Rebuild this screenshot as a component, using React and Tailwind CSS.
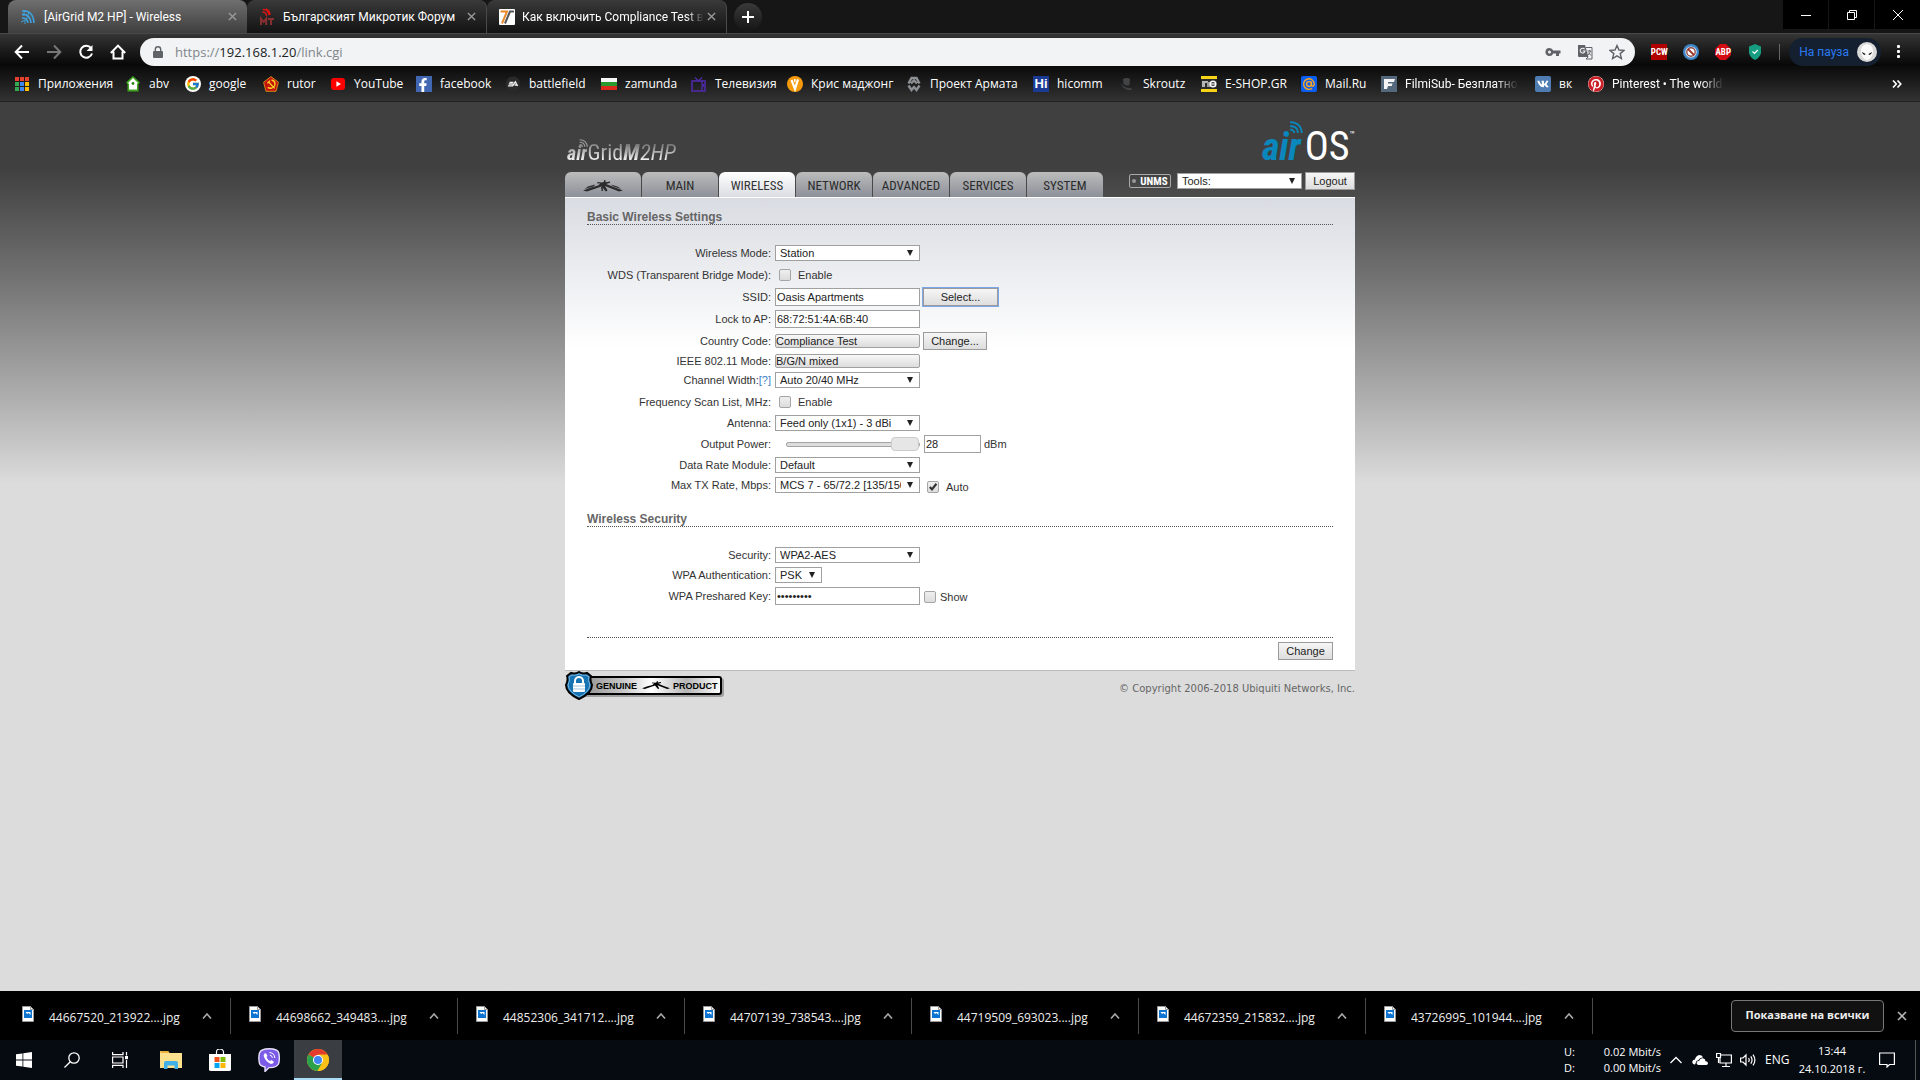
import React from 'react';
import { FcGoogle } from 'react-icons/fc';
import { FaFacebookF, FaVk, FaPinterest } from 'react-icons/fa';

const tools = ['Tools:', 'Align Antenna...', 'Site Survey...', 'Discovery...', 'Ping...', 'Traceroute...', 'Speed Test...'];

const downloads = [
  '44667520_213922....jpg',
  '44698662_349483....jpg',
  '44852306_341712....jpg',
  '44707139_738543....jpg',
  '44719509_693023....jpg',
  '44672359_215832....jpg',
  '43726995_101944....jpg',
];

/* ---------- bookmark icons ---------- */

function AppsIcon() {
  const colors = ['#e8402f', '#e8402f', '#e8402f', '#34a853', '#4285f4', '#fbbc05', '#34a853', '#4285f4', '#fbbc05'];
  return (
    <svg viewBox="0 0 16 16" className="size-4">
      {colors.map((c, i) => (
        <rect key={i} x={1 + (i % 3) * 5} y={1 + Math.floor(i / 3) * 5} width="4" height="4" fill={c} />
      ))}
    </svg>
  );
}

function AbvIcon() {
  return (
    <svg viewBox="0 0 16 16" className="size-4">
      <path d="M8 0 L15 6.5 L13.5 8 V15.5 H2.5 V8 L1 6.5 Z" fill="#3fa51f" />
      <path d="M8 2 L13 7 L12 8 V13.5 H4 V8 L3 7 Z" fill="#fff" />
      <circle cx="8" cy="7.5" r="1.4" fill="#2c8a12" />
    </svg>
  );
}

function GoogleIcon() {
  return (
    <span className="flex size-4 items-center justify-center rounded-full bg-white">
      <FcGoogle className="size-[14px]" />
    </span>
  );
}

function RutorIcon() {
  return (
    <svg viewBox="0 0 16 16" className="size-4">
      <path d="M8 .6 L15.4 6.2 L13 15.3 H3 L.6 6.2 Z" fill="#c4120c" stroke="#e8a51a" strokeWidth=".8" />
      <path d="M8.5 4 a4 4 0 0 1 .6 7.8 a4.5 4.5 0 0 1 -4.4 -.4 M4.4 7.2 L7 4.6 M5.6 6 L11.6 12.4" fill="none" stroke="#f9d423" strokeWidth="1.3" />
    </svg>
  );
}

function YoutubeIcon() {
  return (
    <svg viewBox="0 0 16 16" className="size-4">
      <rect x="1" y="2" width="14" height="12" rx="3" fill="#f00" />
      <path d="M6.4 5.3 L11 8 L6.4 10.7 Z" fill="#fff" />
    </svg>
  );
}

function FacebookIcon() {
  return (
    <span className="flex size-4 items-end justify-end bg-[#4267b2] pr-[2px]">
      <FaFacebookF className="size-[14px] text-white" />
    </span>
  );
}

function EaIcon() {
  return (
    <svg viewBox="0 0 16 16" className="size-4">
      <circle cx="8" cy="8" r="7.5" fill="#2a2a2a" />
      <path d="M4.5 6.3 H8.5 M3.8 8 H7.8 M3 9.8 H7.6 L10.4 5.8 L12.6 10 M9.6 9 H12" fill="none" stroke="#f2f2f2" strokeWidth="1.3" />
    </svg>
  );
}

function FlagIcon() {
  return (
    <svg viewBox="0 0 16 16" className="size-4">
      <rect y="2" width="16" height="4" fill="#f7f7f7" />
      <rect y="6" width="16" height="4" fill="#2a9b2f" />
      <rect y="10" width="16" height="4" fill="#dd2a1b" />
    </svg>
  );
}

function TvIcon() {
  return (
    <svg viewBox="0 0 16 16" className="size-4" fill="none" stroke="#4f2aa8">
      <rect x="1" y="5" width="13" height="10" strokeWidth="1.6" />
      <path d="M11 5 V15 M7.5 5 L4 1.5 M7.5 5 L11 1.5 M12.5 8 V11" strokeWidth="1.3" />
    </svg>
  );
}

function KrisIcon() {
  return (
    <svg viewBox="0 0 16 16" className="size-4">
      <circle cx="8" cy="8" r="8" fill="#f59a0c" />
      <path d="M4.5 4 L8 13 L11 3.4" fill="none" stroke="#fff" strokeWidth="2.2" />
      <path d="M7.8 3 V6" stroke="#fff" strokeWidth="1.6" />
    </svg>
  );
}

function ArmataIcon() {
  return (
    <svg viewBox="0 0 16 16" className="size-4" fill="none" stroke="#8d9196" strokeWidth="2.4">
      <path d="M2.5 7.5 L5.5 2 H10.5 L13.5 7.5 M5 7.5 L8 4.5 L11 7.5" />
      <path d="M2.5 9.5 L5.5 14 L8 11 L10.5 14 L13.5 9.5" />
    </svg>
  );
}

function HiIcon() {
  return (
    <span className="flex size-4 items-center justify-center bg-[#1b3a94] font-[Liberation_Sans,sans-serif] text-[13px] leading-none font-bold text-white">
      Hi
    </span>
  );
}

function SkroutzIcon() {
  return (
    <svg viewBox="0 0 16 16" className="size-4">
      <path d="M4 3 Q8 1 11 3 L10.5 9 Q8 10.5 4.5 8 Z M1 7 Q6 13 12 12 L13 14 Q5 15 1 7 Z" fill="#424446" />
    </svg>
  );
}

function EshopIcon() {
  return (
    <svg viewBox="0 0 16 16" className="size-4">
      <rect width="16" height="16" fill="#2b2b2b" />
      <rect width="16" height="3" fill="#f7d417" />
      <rect y="13" width="16" height="3" fill="#f7d417" />
      <path d="M1 5 H7 V7 H4 V11 H1 Z" fill="#b5b5b5" />
      <rect x="6" y="6" width="3" height="5" fill="#9a9a9a" />
      <circle cx="12" cy="8" r="2.8" fill="none" stroke="#fff" strokeWidth="1.5" />
      <path d="M9.5 8 H14.5" stroke="#fff" strokeWidth="1.2" />
    </svg>
  );
}

function MailIcon() {
  return (
    <svg viewBox="0 0 16 16" className="size-4">
      <rect width="16" height="16" rx="2" fill="#0a5ff0" />
      <circle cx="8" cy="8" r="2.4" fill="none" stroke="#fca521" strokeWidth="1.4" />
      <path d="M10.4 5.6 V8.8 Q10.6 10.6 12 10.2 Q13.4 9.6 13.2 7.6 A5.3 5.3 0 1 0 11 12.4" fill="none" stroke="#fca521" strokeWidth="1.4" />
    </svg>
  );
}

function FilmiIcon() {
  return (
    <svg viewBox="0 0 16 16" className="size-4">
      <rect width="16" height="16" fill="#56697c" />
      <path d="M3 13 V3 H14 L13 6 H7 V7.5 H11.5 L10.8 10 H7 L6 13 Z" fill="#f4f4f4" />
    </svg>
  );
}

function VkIcon() {
  return (
    <span className="flex size-4 items-center justify-center rounded-xs bg-[#4f7db3]">
      <FaVk className="size-3 text-white" />
    </span>
  );
}

function PinterestIcon() {
  return (
    <span className="flex size-4 rounded-full bg-white">
      <FaPinterest className="size-4 text-[#cb1f27]" />
    </span>
  );
}

const bookmarks = [
  { name: 'Приложения', icon: AppsIcon, width: 'w-[111px]' },
  { name: 'abv', icon: AbvIcon, width: 'w-[60px]' },
  { name: 'google', icon: GoogleIcon, width: 'w-[78px]' },
  { name: 'rutor', icon: RutorIcon, width: 'w-[67px]' },
  { name: 'YouTube', icon: YoutubeIcon, width: 'w-[86px]' },
  { name: 'facebook', icon: FacebookIcon, width: 'w-[89px]' },
  { name: 'battlefield', icon: EaIcon, width: 'w-[96px]' },
  { name: 'zamunda', icon: FlagIcon, width: 'w-[90px]' },
  { name: 'Телевизия', icon: TvIcon, width: 'w-[96px]' },
  { name: 'Крис маджонг', icon: KrisIcon, width: 'w-[119px]' },
  { name: 'Проект Армата', icon: ArmataIcon, width: 'w-[127px]' },
  { name: 'hicomm', icon: HiIcon, width: 'w-[86px]' },
  { name: 'Skroutz', icon: SkroutzIcon, width: 'w-[82px]' },
  { name: 'E-SHOP.GR', icon: EshopIcon, width: 'w-[100px]' },
  { name: 'Mail.Ru', icon: MailIcon, width: 'w-[80px]' },
  { name: 'FilmiSub- Безплатно', icon: FilmiIcon, width: 'w-[154px]', fade: true },
  { name: 'вк', icon: VkIcon, width: 'w-[53px]' },
  { name: "Pinterest • The world'", icon: PinterestIcon, width: 'w-[152px]', fade: true },
];

/* ---------- browser chrome ---------- */

function WavesIcon() {
  return (
    <svg viewBox="0 0 16 16" className="size-4" fill="none" stroke="#3fa0dc" strokeWidth="1.7">
      <path d="M2 2 Q13 1 14 14 M2 5.5 Q10 5 11 14 M2 9 Q7.5 9 8 14" />
      <path d="M1 13 L5 11 L5 15 M5 1 L3 7 M9 3 L6 12" strokeWidth="1" />
    </svg>
  );
}

function MtIcon() {
  return (
    <svg viewBox="0 0 16 18" className="h-[18px] w-4" fill="none">
      <path d="M4 1.5 Q9 1 10 7 M3.5 4 Q7 4 7.6 8 M7 1 Q11 3 11 7" stroke="#e01313" strokeWidth="1.4" />
      <path d="M2 17 V10.5 L4.6 14 L7.2 10.5 V17 M9 11 H15 M12 11 V17" stroke="#8a3030" strokeWidth="1.9" />
    </svg>
  );
}

function TtIcon() {
  return (
    <svg viewBox="0 0 16 16" className="size-4">
      <rect width="16" height="16" rx="1" fill="#fff" />
      <path d="M1.5 2.5 H8 L3 14.5" fill="none" stroke="#e98a2f" strokeWidth="2" />
      <path d="M15 2.5 H11 L6 14.5" fill="none" stroke="#54565a" strokeWidth="2" />
    </svg>
  );
}

function CloseIcon({ className }) {
  return (
    <svg viewBox="0 0 10 10" className={className} fill="none" stroke="currentColor" strokeWidth="1.5">
      <path d="M1 1 L9 9 M9 1 L1 9" />
    </svg>
  );
}

function BrowserTab({ icon: Icon, title, active, fade }) {
  return (
    <div
      className={
        active
          ? 'flex h-[33px] w-[239px] items-center rounded-t-lg bg-linear-to-b from-[#707070] to-[#3e3e3e] pr-[10px] pl-3'
          : 'flex h-[33px] w-[240px] items-center rounded-t-lg border-r border-[#4a4a4a] bg-linear-to-b from-[#3a3a3a] to-[#131313] pr-[10px] pl-3'
      }
    >
      <Icon />
      <span
        className={
          fade
            ? 'ml-[7px] mask-r-from-90% font-[Roboto,sans-serif] text-[12px] leading-4 whitespace-nowrap text-white'
            : 'ml-2 font-[Roboto,sans-serif] text-[12px] leading-4 whitespace-nowrap text-white'
        }
      >
        {title}
      </span>
      <button aria-label="Close tab" className="ml-auto text-[#9a9a9a]">
        <CloseIcon className="size-[9px]" />
      </button>
    </div>
  );
}

function TabStrip() {
  return (
    <div className="flex h-[33px] items-start justify-between bg-[#161616] pl-2">
      <div className="flex">
        <BrowserTab icon={WavesIcon} title="[AirGrid M2 HP] - Wireless" active />
        <BrowserTab icon={MtIcon} title="Българският Микротик Форум" />
        <BrowserTab icon={TtIcon} title="Как включить Compliance Test в" fade />
        <button aria-label="New tab" className="mt-[3px] ml-[7px] flex size-7 items-center justify-center rounded-full bg-linear-to-b from-[#3a3a3a] to-[#151515] text-white">
          <svg viewBox="0 0 12 12" className="size-3" stroke="currentColor" strokeWidth="2">
            <path d="M6 0 V12 M0 6 H12" />
          </svg>
        </button>
      </div>
      <div className="flex h-[29px] gap-px text-white">
        <button aria-label="Minimize" className="flex w-[45px] items-center justify-center bg-black">
          <svg viewBox="0 0 10 10" className="size-[10px]" stroke="currentColor"><path d="M0 5.5 H10" /></svg>
        </button>
        <button aria-label="Restore" className="flex w-[45px] items-center justify-center bg-black">
          <svg viewBox="0 0 10 10" className="size-[10px]" fill="none" stroke="currentColor">
            <path d="M.5 2.5 H7.5 V9.5 H.5 Z M2.5 2 V.5 H9.5 V7.5 H8" />
          </svg>
        </button>
        <button aria-label="Close" className="flex w-[45px] items-center justify-center bg-black">
          <svg viewBox="0 0 10 10" className="size-[10px]" stroke="currentColor"><path d="M0 0 L10 10 M10 0 L0 10" /></svg>
        </button>
      </div>
    </div>
  );
}

function Toolbar() {
  return (
    <div className="flex h-[33px] items-center border-t border-[#484848] bg-linear-to-b from-[#353535] to-[#070707] pt-1 pr-[19px] pl-[14px] text-white">
      <div className="flex gap-4">
        <button aria-label="Back">
          <svg viewBox="0 0 16 16" className="size-4" fill="none" stroke="currentColor" strokeWidth="2"><path d="M15 8 H2 M8 1.5 L1.7 8 L8 14.5" /></svg>
        </button>
        <button aria-label="Forward" className="text-[#777]">
          <svg viewBox="0 0 16 16" className="size-4" fill="none" stroke="currentColor" strokeWidth="2"><path d="M1 8 H14 M8 1.5 L14.3 8 L8 14.5" /></svg>
        </button>
        <button aria-label="Reload">
          <svg viewBox="0 0 16 16" className="size-4" fill="none" stroke="currentColor" strokeWidth="2">
            <path d="M13 4 A6 6 0 1 0 14 9.5" />
            <path d="M14.5 1 V7 H8.5 Z" fill="currentColor" stroke="none" />
          </svg>
        </button>
        <button aria-label="Home">
          <svg viewBox="0 0 16 16" className="size-4" fill="none" stroke="currentColor" strokeWidth="2"><path d="M.8 9 L8 1.6 L15.2 9 M3.5 7.5 V14.5 H12.5 V7.5" /></svg>
        </button>
      </div>

      <div className="ml-[14px] flex h-7 flex-1 items-center rounded-full bg-[#f1f3f4] pr-[10px] pl-[13px] text-[#5f6368]">
        <svg viewBox="0 0 10 12" className="h-3 w-[10px]">
          <rect y="5" width="10" height="7" rx="1" fill="currentColor" />
          <path d="M2.3 5.5 V3.4 A2.7 2.7 0 0 1 7.7 3.4 V5.5" fill="none" stroke="currentColor" strokeWidth="1.4" />
        </svg>
        <p className="ml-3 flex-1 text-[13px] leading-5 text-[#80868b]">
          https://<span className="text-[#202124]">192.168.1.20</span>/link.cgi
        </p>
        <div className="flex items-center gap-4">
          <button aria-label="Saved password">
            <svg viewBox="0 0 16 16" className="size-4">
              <path d="M4.5 4 A4 4 0 1 0 8.2 9.4 H11 V12 H14 V9.4 H15.5 V6.6 H8.2 A4 4 0 0 0 4.5 4 Z M4.5 6.5 A1.5 1.5 0 1 1 4.5 9.5 A1.5 1.5 0 1 1 4.5 6.5 Z" fill="currentColor" fillRule="evenodd" />
            </svg>
          </button>
          <button aria-label="Translate">
            <svg viewBox="0 0 16 16" className="size-4">
              <path d="M1 1 H8 L11.5 13 H2 A1 1 0 0 1 1 12 Z" fill="currentColor" />
              <path d="M7.6 5.2 A2.4 2.4 0 1 0 8 7 H5.6" fill="none" stroke="#f1f3f4" strokeWidth="1.1" />
              <path d="M9 3.5 H15 V15 H9 L11 13 M10.5 7 H14 M12.3 6 V7 M13.5 7 Q13 10 10.8 11 M11.3 8.5 L14 11.5" fill="none" stroke="currentColor" />
            </svg>
          </button>
          <button aria-label="Bookmark">
            <svg viewBox="0 0 16 16" className="size-4" fill="none" stroke="currentColor" strokeWidth="1.4">
              <path d="M8 1.5 L10 6 L15 6.4 L11.2 9.6 L12.4 14.5 L8 11.8 L3.6 14.5 L4.8 9.6 L1 6.4 L6 6 Z" />
            </svg>
          </button>
        </div>
      </div>

      <div className="ml-4 flex items-center gap-4">
        <span className="flex size-4 items-center justify-center bg-[#b00000] font-[Roboto_Condensed,Liberation_Sans,sans-serif] text-[9px] leading-none font-bold">PCW</span>
        <svg viewBox="0 0 16 16" className="size-4">
          <circle cx="8" cy="8" r="8" fill="#3f86c9" />
          <circle cx="8" cy="8" r="5.6" fill="#fff" />
          <circle cx="8" cy="8" r="4.2" fill="none" stroke="#8c4b45" strokeWidth="1.4" />
          <path d="M5 5 L11 11" stroke="#a3322b" strokeWidth="1.8" />
        </svg>
        <span className="relative flex size-4 items-center justify-center">
          <svg viewBox="0 0 16 16" className="absolute inset-0 size-4"><path d="M5 0 H11 L16 5 V11 L11 16 H5 L0 11 V5 Z" fill="#d40d12" /></svg>
          <span className="relative font-[Roboto_Condensed,Liberation_Sans,sans-serif] text-[9px] leading-none font-bold">ABP</span>
        </span>
        <svg viewBox="0 0 16 16" className="size-4">
          <path d="M8 0 L14 2.5 V9 Q13 13.5 8 16 Q3 13.5 2 9 V2.5 Z" fill="#169c80" />
          <path d="M5.5 7.5 L7.5 9.5 L10.8 6" fill="none" stroke="#fff" strokeWidth="1.2" />
        </svg>
      </div>
      <span className="mx-[9px] ml-4 h-4 w-px bg-[#666]" />
      <button className="flex h-7 items-center rounded-full bg-[#142030] pr-1 pl-[10px] font-[Roboto,sans-serif] text-[12px] text-[#2b7bf3]">
        На пауза
        <svg viewBox="0 0 20 20" className="ml-2 size-5">
          <circle cx="10" cy="10" r="10" fill="#d9d9d9" />
          <path d="M10 2 Q17 3 16 11 Q14 18 10 18 Q6 18 4 11 Q3 3 10 2" fill="#fafafa" />
          <path d="M5 10 L8.6 12 L7.8 13 Q5.4 12.6 5 10 M15 10 L11.4 12 L12.2 13 Q14.6 12.6 15 10" fill="#111" />
        </svg>
      </button>
      <button aria-label="Menu" className="ml-4">
        <svg viewBox="0 0 4 16" className="h-4 w-1" fill="currentColor">
          <rect y="1" width="3" height="3" rx="1" />
          <rect y="6" width="3" height="3" rx="1" />
          <rect y="11" width="3" height="3" rx="1" />
        </svg>
      </button>
    </div>
  );
}

function BookmarksBar() {
  return (
    <nav className="flex h-9 items-center justify-between border-b border-[#222] bg-linear-to-b from-[#0b0b0b] to-[#333] pr-[18px] pl-[14px]">
      <div className="flex">
        {bookmarks.map((b) => (
          <a key={b.name} href="#" className={`flex shrink-0 items-center ${b.width}`}>
            <b.icon />
            <span className={b.fade ? 'ml-2 mask-r-from-80% font-[Roboto,sans-serif] text-[12px] leading-4 whitespace-nowrap text-white' : 'ml-2 text-[12px] leading-4 whitespace-nowrap text-white'}>
              {b.name}
            </span>
          </a>
        ))}
      </div>
      <button aria-label="More bookmarks" className="text-white">
        <svg viewBox="0 0 10 8" className="h-2 w-[10px]" fill="none" stroke="currentColor" strokeWidth="1.6">
          <path d="M1 .5 L4.3 4 L1 7.5 M5.5 .5 L8.8 4 L5.5 7.5" />
        </svg>
      </button>
    </nav>
  );
}

/* ---------- airOS page ---------- */

function RadiusMark({ className }) {
  return (
    <svg viewBox="0 0 40 12" className={className} fill="currentColor">
      <path d="M0 10.5 L8 7.6 L15 5.6 L17.4 3.4 L14 3.2 L14.4 2 L19 2.4 L21 1.8 L21.2 0 L22.4 0 L22.6 2.2 L27 1.6 L27.2 2.8 L23.2 4 L32 7.4 L40 10.4 L36 11.6 L22 6 L24.6 10.6 L22.8 11.4 L18.6 6.4 L4 11.6 Z" />
      <path d="M12 4.6 L5 6.6 L1.6 9 L11 6.2 Z M28 4.6 L35 6.8 L38 9 L30 6.2 Z" />
      <path d="M18 7 L18.6 11 L20 11 L19.6 7 Z" />
    </svg>
  );
}

function Waves({ className }) {
  return (
    <svg viewBox="0 0 14 14" className={className} fill="none" stroke="currentColor" strokeWidth="1.8">
      <path d="M1 1.2 Q12 1.4 12.8 12 M1 5 Q8.6 5 9 12 M1 8.6 Q5 8.8 5.4 12" />
    </svg>
  );
}

function Select({ id, options, className = 'w-[145px]', ...rest }) {
  return (
    <span className={`relative inline-flex h-4 ${className}`}>
      <select id={id} className="h-4 w-full appearance-none border border-[#a0a0a0] bg-white pr-[18px] pl-1 text-[11px] leading-[14px] text-[#222]" {...rest}>
        {options.map((o) => (
          <option key={o}>{o}</option>
        ))}
      </select>
      <svg viewBox="0 0 6 6" className="pointer-events-none absolute top-[5px] right-[7px] size-[6px]">
        <path d="M0 0 H6 L3 6 Z" fill="#222" />
      </svg>
    </span>
  );
}

function Checkbox({ id, checked }) {
  return (
    <span className="relative inline-flex size-3">
      <input id={id} type="checkbox" defaultChecked={checked} className="peer size-3 appearance-none rounded-xs border border-[#a5a5a5] bg-linear-to-b from-[#efefef] to-[#dcdcdc]" />
      <svg viewBox="0 0 12 12" className="pointer-events-none absolute inset-0 hidden size-3 peer-checked:block" fill="none" stroke="#333" strokeWidth="2.2">
        <path d="M2.8 6 L5 8.4 L9.4 2.8" />
      </svg>
    </span>
  );
}

function Button({ children, className = '' }) {
  return (
    <button className={`h-[18px] border border-[#9a9a9a] bg-linear-to-b from-[#f6f6f6] to-[#dedede] text-[11px] leading-4 text-[#222] ${className}`}>
      {children}
    </button>
  );
}

function Row({ label, htmlFor, help, height = 'h-5', children }) {
  return (
    <div className={`flex items-center gap-[3px] ${height}`}>
      <div className="w-[185px] shrink-0 pr-px text-right whitespace-nowrap">
        <label htmlFor={htmlFor}>{label}</label>
        {help && <a href="#" className="text-[#3b7fc4]">[?]</a>}
      </div>
      {children}
    </div>
  );
}

const inputClass = 'h-[18px] border border-[#a0a0a0] bg-white px-px text-[11px] leading-4 text-[#222]';
const readonlyClass = 'h-[14px] w-[145px] rounded-xs border border-[#a0a0a0] bg-linear-to-b from-[#f8f8f8] to-[#dcdcdc] text-[11px] leading-3 text-[#222]';

function AirNav() {
  const tab = 'flex h-[25px] w-[76px] items-center justify-center rounded-t-md pt-[2px] font-[Roboto_Condensed,Roboto,sans-serif] text-[13px] leading-4';
  return (
    <div className="flex items-start justify-between">
      <nav className="flex gap-px">
        <a href="#" aria-label="Ubiquiti" className={`${tab} bg-linear-to-b from-[#bcbcbc] to-[#8c9098] text-[#2b2b2b]`}>
          <RadiusMark className="h-3 w-10" />
        </a>
        {['MAIN', 'WIRELESS', 'NETWORK', 'ADVANCED', 'SERVICES', 'SYSTEM'].map((name) => (
          <a
            key={name}
            href="#"
            className={
              name === 'WIRELESS'
                ? `${tab} bg-linear-to-b from-white to-[#dadde2] text-[#333]`
                : `${tab} bg-linear-to-b from-[#bcbcbc] to-[#8c9098] text-[#2b2b2b]`
            }
          >
            {name}
          </a>
        ))}
      </nav>
      <div className="flex items-center">
        <span className="mr-[6px] flex h-[14px] w-[42px] items-center justify-center gap-1 rounded-xs border border-[#aaa] font-[Roboto_Condensed,Roboto,sans-serif] text-[11px] leading-none font-bold text-white">
          <span className="size-1 rounded-full bg-[#999]" />
          UNMS
        </span>
        <Select id="tools" aria-label="Tools" options={tools} className="mr-[3px] w-[125px]" />
        <Button className="w-[50px]">Logout</Button>
      </div>
    </div>
  );
}

function AirHeader() {
  return (
    <div className="flex h-[70px] items-end justify-between">
      <div className="relative flex items-baseline pb-[5px] pl-[2px] font-[Roboto_Condensed,Roboto,sans-serif] leading-7">
        <span className="bg-linear-to-b from-[#8a8a8a] from-20% to-white to-80% bg-clip-text text-[20px] font-bold text-transparent italic">air</span>
        <span className="bg-linear-to-b from-[#8a8a8a] from-20% to-white to-80% bg-clip-text text-[22px] text-transparent">Grid</span>
        <span className="bg-linear-to-b from-[#777] from-20% to-white to-80% bg-clip-text pr-px text-[22px] font-bold text-transparent italic">M</span>
        <span className="bg-linear-to-b from-[#777] from-20% to-white to-80% bg-clip-text pr-1 text-[22px] text-transparent italic">2HP</span>
        <Waves className="absolute top-0 left-[14px] size-[9px] text-[#999]" />
      </div>
      <div className="relative flex items-baseline pb-[7px] font-[Roboto_Condensed,Roboto,sans-serif] leading-9">
        <span className="text-[38px] font-bold text-[#0a88bd] italic">air</span>
        <span className="ml-1 text-[40px] text-white">OS</span>
        <Waves className="absolute -top-2 left-[27px] size-[14px] text-[#0a88bd]" />
        <span className="self-start text-[10px] leading-3 text-white">™</span>
      </div>
    </div>
  );
}

function WirelessForm() {
  return (
    <form className="border-t border-b border-t-white border-b-[#bbb] bg-white bg-linear-to-b from-[#d9dce2] to-white to-[150px] px-[22px] pt-3 text-[11px] leading-[14px] text-[#333]" onSubmit={(e) => e.preventDefault()}>
      <h2 className="border-b border-dotted border-[#555] text-[12px] leading-[14px] font-bold text-[#666]">Basic Wireless Settings</h2>
      <div className="pt-[18px]">
        <Row label="Wireless Mode:" htmlFor="mode">
          <Select id="mode" options={['Station', 'Access Point']} />
        </Row>
        <Row label="WDS (Transparent Bridge Mode):" htmlFor="wds" height="h-[23px]">
          <span className="flex items-center gap-[7px] pl-1">
            <Checkbox id="wds" />
            <label htmlFor="wds">Enable</label>
          </span>
        </Row>
        <Row label="SSID:" htmlFor="ssid" height="h-[22px]">
          <input id="ssid" defaultValue="Oasis Apartments" className={`${inputClass} w-[145px]`} />
          <Button className="w-[75px] outline-1 outline-[#7ba7e8]">Select...</Button>
        </Row>
        <Row label="Lock to AP:" htmlFor="ap" height="h-[22px]">
          <input id="ap" defaultValue="68:72:51:4A:6B:40" className={`${inputClass} w-[145px]`} />
        </Row>
        <Row label="Country Code:" htmlFor="country" height="h-[22px]">
          <input id="country" readOnly value="Compliance Test" className={readonlyClass} />
          <Button className="w-16">Change...</Button>
        </Row>
        <Row label="IEEE 802.11 Mode:" htmlFor="ieee" height="h-[18px]">
          <input id="ieee" readOnly value="B/G/N mixed" className={readonlyClass} />
        </Row>
        <Row label="Channel Width:" htmlFor="width" help>
          <Select id="width" options={['Auto 20/40 MHz', '20 MHz', '40 MHz']} />
        </Row>
        <Row label="Frequency Scan List, MHz:" htmlFor="scan" height="h-[23px]">
          <span className="flex items-center gap-[7px] pl-1">
            <Checkbox id="scan" />
            <label htmlFor="scan">Enable</label>
          </span>
        </Row>
        <Row label="Antenna:" htmlFor="antenna">
          <Select id="antenna" options={['Feed only (1x1) - 3 dBi']} />
        </Row>
        <Row label="Output Power:" htmlFor="power" height="h-[22px]">
          <input
            id="power"
            type="range"
            min="0"
            max="28"
            defaultValue="28"
            className="mr-px ml-[11px] h-[14px] w-[134px] appearance-none bg-transparent [&::-webkit-slider-runnable-track]:h-[5px] [&::-webkit-slider-runnable-track]:rounded-xs [&::-webkit-slider-runnable-track]:border [&::-webkit-slider-runnable-track]:border-[#a5a5a5] [&::-webkit-slider-runnable-track]:bg-[#ddd] [&::-webkit-slider-thumb]:-mt-[6px] [&::-webkit-slider-thumb]:h-[14px] [&::-webkit-slider-thumb]:w-7 [&::-webkit-slider-thumb]:appearance-none [&::-webkit-slider-thumb]:rounded-sm [&::-webkit-slider-thumb]:border [&::-webkit-slider-thumb]:border-[#ccc] [&::-webkit-slider-thumb]:bg-[#e6e6e6]"
          />
          <input aria-label="Output power, dBm" defaultValue="28" className={`${inputClass} w-[57px]`} />
          <span>dBm</span>
        </Row>
        <Row label="Data Rate Module:" htmlFor="module">
          <Select id="module" options={['Default']} />
        </Row>
        <Row label="Max TX Rate, Mbps:" htmlFor="rate">
          <Select id="rate" options={['MCS 7 - 65/72.2 [135/150]']} />
          <span className="flex items-center gap-[7px] pt-[3px] pl-1">
            <Checkbox id="auto" checked />
            <label htmlFor="auto">Auto</label>
          </span>
        </Row>
      </div>

      <h2 className="mt-[17px] border-b border-dotted border-[#555] text-[12px] leading-[14px] font-bold text-[#666]">Wireless Security</h2>
      <div className="pt-[18px]">
        <Row label="Security:" htmlFor="security">
          <Select id="security" options={['WPA2-AES', 'WPA-AES', 'none']} />
        </Row>
        <Row label="WPA Authentication:" htmlFor="auth">
          <Select id="auth" options={['PSK', 'EAP']} className="w-[47px]" />
        </Row>
        <Row label="WPA Preshared Key:" htmlFor="key" height="h-[22px]">
          <input id="key" type="password" defaultValue="password1" autoComplete="off" className={`${inputClass} w-[145px]`} />
          <span className="flex items-center gap-1 pt-[2px] pl-px">
            <Checkbox id="show" />
            <label htmlFor="show">Show</label>
          </span>
        </Row>
      </div>

      <div className="mt-[30px] flex justify-end border-t border-dotted border-[#555] pt-1 pb-[10px]">
        <Button className="w-[55px]">Change</Button>
      </div>
    </form>
  );
}

function GenuineBadge() {
  return (
    <svg viewBox="0 0 162 30" className="h-[30px] w-[162px]">
      <defs>
        <linearGradient id="plate">
          <stop offset="0" stopColor="#8f8f8f" />
          <stop offset=".3" stopColor="#c8c8c8" />
          <stop offset=".5" stopColor="#fff" />
          <stop offset=".75" stopColor="#b5b5b5" />
          <stop offset="1" stopColor="#fff" />
        </linearGradient>
      </defs>
      <rect x="18" y="7" width="141" height="19" rx="3" fill="#9f9f9f" />
      <rect x="17" y="6" width="139" height="17" rx="2" fill="url(#plate)" stroke="#000" strokeWidth="2" />
      <path d="M14 1 Q18 3.5 22 2 L26 5 Q24.5 9 27 14 Q27 22 14 28 Q1 22 1 14 Q3.5 9 2 5 L6 2 Q10 3.5 14 1 Z" fill="#1673b4" stroke="#000" strokeWidth="2" />
      <path d="M14 3 Q18 5 21 4 L24 6 Q22.5 9 25 14 Q24 21 14 26 Q4 21 3 14 Q5.5 9 4 6 L7 4 Q10 5 14 3 Z" fill="none" stroke="#bfe0f5" strokeWidth=".6" />
      <rect x="8" y="12" width="12" height="9" rx="1" fill="#fff" />
      <path d="M10 12 V10 A4 4 0 0 1 18 10 V12" fill="none" stroke="#fff" strokeWidth="2" />
      <path d="M8 15 H20 M8 18 H20" stroke="#9ec5e0" />
      <text x="31" y="18" className="font-[Liberation_Sans,sans-serif] text-[9px] font-bold" fill="#000">GENUINE</text>
      <g transform="translate(77 10) scale(.7)">
        <path d="M0 10.5 L8 7.6 L15 5.6 L17.4 3.4 L14 3.2 L14.4 2 L19 2.4 L21 1.8 L21.2 0 L22.4 0 L22.6 2.2 L27 1.6 L27.2 2.8 L23.2 4 L32 7.4 L40 10.4 L36 11.6 L22 6 L24.6 10.6 L22.8 11.4 L18.6 6.4 L4 11.6 Z" />
      </g>
      <text x="108" y="18" className="font-[Liberation_Sans,sans-serif] text-[9px] font-bold" fill="#000">PRODUCT</text>
    </svg>
  );
}

function AirOsPage() {
  return (
    <main className="flex-1 overflow-hidden bg-[#dcdcdc] bg-linear-to-b from-[#404040] from-[66px] to-[#dcdcdc] to-[382px] font-[Liberation_Sans,Arial,sans-serif]">
      <div className="mx-auto w-[790px]">
        <AirHeader />
        <AirNav />
        <WirelessForm />
        <footer className="flex items-start justify-between">
          <GenuineBadge />
          <p className="pt-3 font-[DejaVu_Sans,Verdana,sans-serif] text-[10px] leading-3 text-[#666]">© Copyright 2006-2018 Ubiquiti Networks, Inc.</p>
        </footer>
      </div>
    </main>
  );
}

/* ---------- downloads and taskbar ---------- */

function FileIcon() {
  return (
    <svg viewBox="0 0 12 16" className="h-4 w-3">
      <path d="M.5 .5 H8.5 L11.5 3.5 V15.5 H.5 Z" fill="#fff" stroke="#9a9a9a" />
      <path d="M8.5 .5 V3.5 H11.5" fill="none" stroke="#9a9a9a" />
      <rect x="2" y="4" width="8" height="8" fill="#0d74d1" />
      <path d="M3.5 6 L5 8 L6.5 7 L8.5 9 V6 Z" fill="#fff" />
    </svg>
  );
}

function Downloads() {
  return (
    <div className="flex h-[49px] items-center justify-between bg-black pr-[13px] pl-1">
      <div className="flex">
        {downloads.map((name) => (
          <div key={name} className="flex h-9 w-[227px] items-center border-r border-[#4a4a4a] pl-[18px]">
            <span className="-mt-1"><FileIcon /></span>
            <span className="ml-[15px] w-[148px] pt-[5px] text-[12px] leading-4 whitespace-nowrap text-[#eee]">{name}</span>
            <button aria-label={`Options for ${name}`} className="ml-[5px] text-[#aaa]">
              <svg viewBox="0 0 10 6" className="h-[6px] w-[10px]" fill="none" stroke="currentColor" strokeWidth="1.6"><path d="M1 5.5 L5 1 L9 5.5" /></svg>
            </button>
          </div>
        ))}
      </div>
      <div className="flex items-center gap-[13px]">
        <button className="h-8 w-[153px] rounded-sm border border-[#777] bg-[#111] text-[11px] font-bold whitespace-nowrap text-[#eee]">Показване на всички</button>
        <button aria-label="Close downloads" className="text-[#bbb]"><CloseIcon className="size-[10px]" /></button>
      </div>
    </div>
  );
}

function Taskbar() {
  const slot = 'flex h-10 w-12 items-center justify-center';
  return (
    <div className="flex h-10 justify-between bg-[#060b12] text-white">
      <div className="flex gap-[3px]">
        <div className="flex">
          <button aria-label="Start" className={slot}>
            <svg viewBox="0 0 16 16" className="size-4" fill="currentColor"><path d="M0 2.3 L6.5 1.4 V7.6 H0 Z M7.3 1.3 L16 0 V7.6 H7.3 Z M0 8.4 H6.5 V14.6 L0 13.7 Z M7.3 8.4 H16 V16 L7.3 14.7 Z" /></svg>
          </button>
          <button aria-label="Search" className={slot}>
            <svg viewBox="0 0 16 16" className="size-4" fill="none" stroke="currentColor" strokeWidth="1.3"><circle cx="10" cy="6" r="5.2" /><path d="M6.3 9.7 L.5 15.5" /></svg>
          </button>
          <button aria-label="Task view" className={slot}>
            <svg viewBox="0 0 16 16" className="size-4" fill="none" stroke="currentColor" strokeWidth="1.2"><path d="M.6 0 V2.6 H11 V0 M.6 16 V13.4 H11 V16 M.6 5 H11 V11 H.6 Z M14.5 0 V3.5 M14.5 8 V16" /><rect x="13.6" y="4.6" width="1.8" height="2" fill="currentColor" /></svg>
          </button>
        </div>
        <div className="flex gap-px">
          <button aria-label="File Explorer" className={slot}>
            <svg viewBox="0 0 22 18" className="h-[18px] w-[22px]"><path d="M0 0 H8 L9.5 2 H22 V17 H0 Z" fill="#fbe08e" /><path d="M0 0 H8 L9.5 2 H1 Z" fill="#e8b23c" /><path d="M4 18 V12 Q4 10 6 10 H16 Q18 10 18 12 V18 H14.5 V14.5 H7.5 V18 Z" fill="#3fb0e8" /></svg>
          </button>
          <button aria-label="Store" className={slot}>
            <svg viewBox="0 0 22 22" className="size-[22px]"><path d="M0 5 H22 V20.5 Q22 22 20 22 H2 Q0 22 0 20.5 Z" fill="#fff" /><path d="M7.5 5 V3 A3.5 3 0 0 1 14.5 3 V5" fill="none" stroke="#fff" strokeWidth="1.2" /><rect x="5.5" y="8" width="5" height="5" fill="#f1511b" /><rect x="11.5" y="8" width="5" height="5" fill="#80bb04" /><rect x="5.5" y="14" width="5" height="5" fill="#04a5ef" /><rect x="11.5" y="14" width="5" height="5" fill="#fbb905" /></svg>
          </button>
          <button aria-label="Viber" className={slot}>
            <svg viewBox="0 0 22 24" className="h-6 w-[22px]"><path d="M11 .8 Q20 .8 20.8 5 Q22 11 20.5 16 Q18 20 11 19.6 L7 23.5 V19 Q2 18 1.4 15 Q.2 9 1.5 5 Q3 .8 11 .8 Z" fill="#7b5be8" stroke="#e6e0fb" strokeWidth="1.4" /><path d="M6.5 5.5 Q5 7 6 9 Q8 14 13 16 Q15 16 16 14 L13.5 12 L12 13 Q9.5 12 8.5 9 L9.5 8 L8 5.3 Z" fill="#fff" /><path d="M11.5 4.5 Q16.5 5 16.8 10 M11.8 7 Q14 7.3 14.4 9.8" fill="none" stroke="#fff" /></svg>
          </button>
          <button aria-label="Chrome" className={`${slot} border-b-2 border-[#a9dcf5] bg-[#3a3d42] pt-[2px]`}>
            <svg viewBox="0 0 22 22" className="size-[22px]">
              <circle cx="11" cy="11" r="11" fill="#fbc116" />
              <path d="M11 11 L1.5 5.5 A11 11 0 0 1 20.5 5.5 H11 Z" fill="#e33b2e" />
              <path d="M11 11 L1.5 5.5 A11 11 0 0 0 10.5 22 L15.5 13.5 Z" fill="#2ba14b" />
              <path d="M11 6 H20.8 A11 11 0 0 1 10.5 22 L15.5 13.5 Z" fill="#fbc116" />
              <circle cx="11" cy="11" r="5" fill="#fff" />
              <circle cx="11" cy="11" r="4" fill="#4285f4" />
            </svg>
          </button>
        </div>
      </div>

      <div className="flex items-center text-[12px] leading-4">
        <div className="flex w-[97px] justify-between text-[11px]">
          <p>U:<br />D:</p>
          <p className="text-right whitespace-nowrap">0.02 Mbit/s<br />0.00 Mbit/s</p>
        </div>
        <div className="ml-[7px] flex items-center gap-2">
          <svg viewBox="0 0 16 16" className="size-4" fill="none" stroke="currentColor" strokeWidth="1.3"><path d="M2.5 11 L8 5.5 L13.5 11" /></svg>
          <svg viewBox="0 0 16 16" className="size-4" fill="currentColor"><path d="M3 12.5 Q0 12 .3 9.5 Q1 7.5 3 7.5 Q3.5 4 7 3 Q10 3 11 5.2 Q7.5 5.5 6.3 8.3 Q4 8.5 3.7 11 Z" /><path d="M6 13 Q4 12 4.8 10 Q5.5 8.8 7 9 Q8 6 11 6.3 Q13.5 7 13.5 9.3 Q16 9.5 16 11.3 Q15.8 13 14.5 13 Z" /></svg>
          <svg viewBox="0 0 16 16" className="size-4" fill="none" stroke="currentColor" strokeWidth="1.2"><path d="M5 3 H15.4 V11 H4 V6 M10 11 V14.5 M6 14.5 H14" /><path d="M.6 1.5 H4.5 V5.5 H.6 Z M2.5 5.5 V11" /></svg>
          <svg viewBox="0 0 16 16" className="size-4" fill="none" stroke="currentColor" strokeWidth="1.2"><path d="M.6 6 H3 L6 3 V13 L3 10 H.6 Z M8.5 6 Q10 8 8.5 10 M10.8 4.3 Q13.3 8 10.8 11.7 M13 2.6 Q16.8 8 13 13.4" /></svg>
        </div>
        <span className="ml-[9px] w-[27px]">ENG</span>
        <p className="ml-1 w-[72px] text-center text-[11px] leading-[18px] whitespace-nowrap">13:44<br />24.10.2018 г.</p>
        <svg viewBox="0 0 16 16" className="ml-[11px] size-4" fill="none" stroke="currentColor" strokeWidth="1.2"><path d="M.6 1 H15.4 V12.5 H10.5 L8 15 V12.5 H.6 Z" /></svg>
        <span className="ml-5 h-10 w-[5px] border-l border-[#555]" />
      </div>
    </div>
  );
}

export default function App() {
  return (
    <div className="flex h-screen flex-col overflow-hidden font-[Open_Sans,Noto_Sans,sans-serif]">
      <header>
        <TabStrip />
        <Toolbar />
        <BookmarksBar />
      </header>
      <AirOsPage />
      <Downloads />
      <Taskbar />
    </div>
  );
}
